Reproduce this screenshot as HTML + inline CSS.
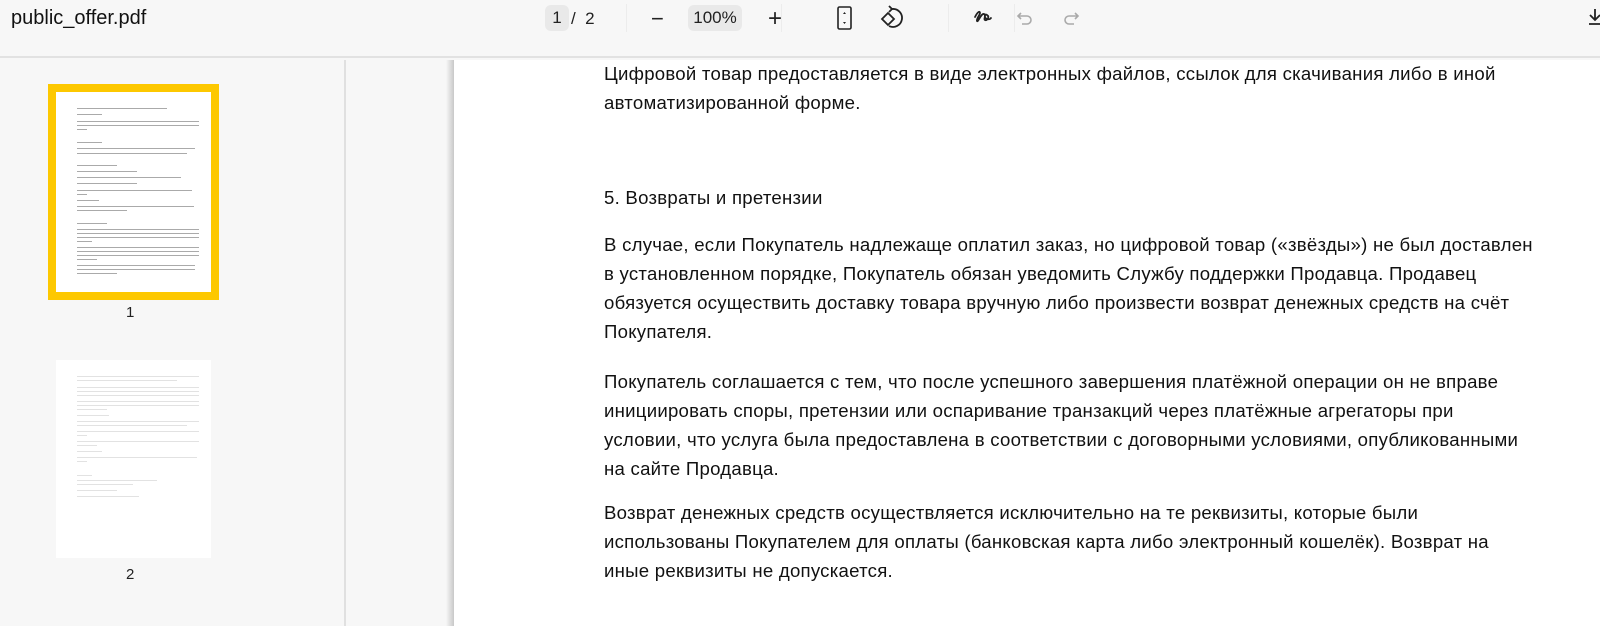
<!DOCTYPE html>
<html><head><meta charset="utf-8">
<style>
*{margin:0;padding:0;box-sizing:border-box}
body{width:1600px;height:626px;overflow:hidden;background:#f7f7f7;font-family:"Liberation Sans","DejaVu Sans",sans-serif;position:relative}
.tb{position:absolute;left:0;top:0;width:1600px;height:58px;background:#f7f7f7;border-bottom:2px solid #e2e2e2}
.title{position:absolute;left:11px;top:7px;font-size:20px;color:#111}
.side{position:absolute;left:0;top:60px;width:346px;height:566px;background:#f7f7f7;border-right:2px solid #e0e0e0}
.gap{position:absolute;left:348px;top:60px;width:106px;height:566px;background:#f7f7f7}
.shadow{position:absolute;left:446px;top:60px;width:8px;height:566px;background:linear-gradient(to right,#f7f7f7,#c8c8c8)}
.page{position:absolute;left:454px;top:60px;width:1146px;height:566px;background:#fff}
.txt{position:absolute;left:604px;font-size:18.6px;letter-spacing:0.25px;color:#111;line-height:29px;white-space:nowrap}
.thumb1{position:absolute;left:48px;top:84px;width:171px;height:216px;background:#fdc800}
.thumb1 .w{position:absolute;left:8px;top:8px;width:155px;height:200px;background:#fff}
.thumb2{position:absolute;left:56px;top:360px;width:155px;height:198px;background:#fff}
.l{position:absolute;height:1px;background:#aaa}
.thumb2 .l{background:#e2e2e2}
.num{position:absolute;font-size:15px;color:#222}
.btn{position:absolute;background:#e9e9e9;border-radius:6px;font-size:17px;color:#222;text-align:center}
.t{position:absolute;font-size:17px;color:#222}
</style></head><body>
<div class="tb">
<div class="title">public_offer.pdf</div>
<div class="btn" style="left:545px;top:5px;width:24px;height:26px;line-height:26px">1</div>
<div class="t" style="left:571px;top:9px">/ &nbsp;2</div>
<div style="position:absolute;left:626px;top:4px;width:1px;height:28px;background:#ececec"></div>
<div class="t" style="left:651px;top:6px;font-size:22px">−</div>
<div class="btn" style="left:688px;top:5px;width:54px;height:26px;line-height:26px">100%</div>
<div class="t" style="left:768px;top:5px;font-size:24px">+</div>
<div style="position:absolute;left:781px;top:4px;width:1px;height:28px;background:#ececec"></div>
<svg style="position:absolute;left:835px;top:6px" width="20" height="24" viewBox="0 0 20 24"><rect x="3" y="1" width="13" height="22" rx="1.5" fill="none" stroke="#222" stroke-width="1.6"/><path d="M8 8l1.5-2 1.5 2zM8 16l1.5 2 1.5-2z" fill="#222"/></svg>
<svg style="position:absolute;left:878px;top:5px" width="28" height="26" viewBox="0 0 28 26"><path d="M4 14l6-6 6 6-6 6z" fill="none" stroke="#222" stroke-width="1.8"/><path d="M14 4a9 9 0 1 1-3 17" fill="none" stroke="#222" stroke-width="1.8"/><path d="M11 1l3 3-3 3" fill="none" stroke="#222" stroke-width="1.8"/></svg>
<div style="position:absolute;left:948px;top:4px;width:1px;height:28px;background:#ececec"></div>
<svg style="position:absolute;left:970px;top:5px" width="26" height="26" viewBox="0 0 26 26"><path d="M5 12c3-6 5-6 5-4s-4 6-3 8 4-8 7-7-1 5 1 6 5-3 2-5-3 3 0 4 4-1 4-1" fill="none" stroke="#222" stroke-width="1.8" stroke-linecap="round"/></svg>
<div style="position:absolute;left:1014px;top:4px;width:1px;height:28px;background:#ececec"></div>
<svg style="position:absolute;left:1016px;top:9px" width="20" height="20" viewBox="0 0 20 20"><path d="M5 4L2 7l3 3M2 7h9a4 4 0 0 1 0 8H6" fill="none" stroke="#aaa" stroke-width="1.6"/></svg>
<svg style="position:absolute;left:1060px;top:9px" width="20" height="20" viewBox="0 0 20 20"><path d="M15 4l3 3-3 3M18 7H9a4 4 0 0 0 0 8h5" fill="none" stroke="#aaa" stroke-width="1.6"/></svg>
<svg style="position:absolute;left:1588px;top:8px" width="12" height="18" viewBox="0 0 12 18"><path d="M7 1v11M2 7l5 5 5-5M1 16h11" fill="none" stroke="#222" stroke-width="1.8"/></svg>
</div>
<div class="side">
<div class="thumb1" style="top:24px"><div class="w">
<div class="l" style="left:21px;top:16px;width:90px"></div>
<div class="l" style="left:21px;top:22px;width:25px"></div>
<div class="l" style="left:21px;top:29px;width:122px"></div>
<div class="l" style="left:21px;top:33px;width:122px"></div>
<div class="l" style="left:21px;top:37px;width:10px"></div>
<div class="l" style="left:21px;top:50px;width:25px"></div>
<div class="l" style="left:21px;top:56px;width:118px"></div>
<div class="l" style="left:21px;top:61px;width:110px"></div>
<div class="l" style="left:21px;top:73px;width:40px"></div>
<div class="l" style="left:21px;top:79px;width:60px"></div>
<div class="l" style="left:21px;top:85px;width:104px"></div>
<div class="l" style="left:21px;top:91px;width:60px"></div>
<div class="l" style="left:21px;top:98px;width:115px"></div>
<div class="l" style="left:21px;top:102px;width:10px"></div>
<div class="l" style="left:21px;top:108px;width:22px"></div>
<div class="l" style="left:21px;top:114px;width:117px"></div>
<div class="l" style="left:21px;top:118px;width:50px"></div>
<div class="l" style="left:21px;top:131px;width:30px"></div>
<div class="l" style="left:21px;top:137px;width:122px"></div>
<div class="l" style="left:21px;top:141px;width:122px"></div>
<div class="l" style="left:21px;top:145px;width:122px"></div>
<div class="l" style="left:21px;top:149px;width:15px"></div>
<div class="l" style="left:21px;top:155px;width:122px"></div>
<div class="l" style="left:21px;top:159px;width:122px"></div>
<div class="l" style="left:21px;top:163px;width:122px"></div>
<div class="l" style="left:21px;top:167px;width:20px"></div>
<div class="l" style="left:21px;top:173px;width:118px"></div>
<div class="l" style="left:21px;top:177px;width:118px"></div>
<div class="l" style="left:21px;top:181px;width:40px"></div>
</div></div>
<div class="num" style="left:126px;top:244px">1</div>
<div class="thumb2" style="top:300px">
<div class="l" style="left:21px;top:16px;width:122px"></div>
<div class="l" style="left:21px;top:20px;width:100px"></div>
<div class="l" style="left:21px;top:27px;width:122px"></div>
<div class="l" style="left:21px;top:31px;width:122px"></div>
<div class="l" style="left:21px;top:35px;width:122px"></div>
<div class="l" style="left:21px;top:41px;width:122px"></div>
<div class="l" style="left:21px;top:45px;width:122px"></div>
<div class="l" style="left:21px;top:49px;width:30px"></div>
<div class="l" style="left:21px;top:55px;width:32px"></div>
<div class="l" style="left:21px;top:61px;width:122px"></div>
<div class="l" style="left:21px;top:65px;width:110px"></div>
<div class="l" style="left:21px;top:71px;width:122px"></div>
<div class="l" style="left:21px;top:75px;width:10px"></div>
<div class="l" style="left:21px;top:81px;width:122px"></div>
<div class="l" style="left:21px;top:85px;width:20px"></div>
<div class="l" style="left:21px;top:91px;width:25px"></div>
<div class="l" style="left:21px;top:97px;width:120px"></div>
<div class="l" style="left:21px;top:101px;width:10px"></div>
<div class="l" style="left:21px;top:115px;width:15px"></div>
<div class="l" style="left:21px;top:120px;width:80px"></div>
<div class="l" style="left:21px;top:124px;width:56px"></div>
<div class="l" style="left:21px;top:130px;width:40px"></div>
<div class="l" style="left:21px;top:136px;width:62px"></div>
</div>
<div class="num" style="left:126px;top:506px">2</div>
</div>
<div class="gap"></div>
<div class="shadow"></div>
<div class="page"></div>
<div class="txt" style="top:59px">Цифровой товар предоставляется в виде электронных файлов, ссылок для скачивания либо в иной<br>автоматизированной форме.</div>
<div class="txt" style="top:183px">5. Возвраты и претензии</div>
<div class="txt" style="top:230px">В случае, если Покупатель надлежаще оплатил заказ, но цифровой товар («звёзды») не был доставлен<br>в установленном порядке, Покупатель обязан уведомить Службу поддержки Продавца. Продавец<br>обязуется осуществить доставку товара вручную либо произвести возврат денежных средств на счёт<br>Покупателя.</div>
<div class="txt" style="top:367px">Покупатель соглашается с тем, что после успешного завершения платёжной операции он не вправе<br>инициировать споры, претензии или оспаривание транзакций через платёжные агрегаторы при<br>условии, что услуга была предоставлена в соответствии с договорными условиями, опубликованными<br>на сайте Продавца.</div>
<div class="txt" style="top:498px">Возврат денежных средств осуществляется исключительно на те реквизиты, которые были<br>использованы Покупателем для оплаты (банковская карта либо электронный кошелёк). Возврат на<br>иные реквизиты не допускается.</div>
</body></html>
